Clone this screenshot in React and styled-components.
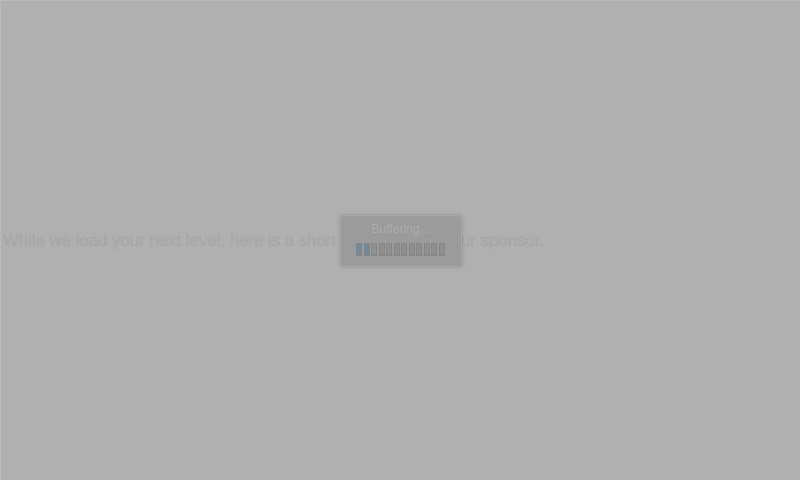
import styled, { createGlobalStyle } from 'styled-components';

const GlobalStyle = createGlobalStyle`
  html, body {
    margin: 0;
    padding: 0;
    background: #b0b0b0;
  }
  body {
    font-family: "Liberation Sans", Arial, sans-serif;
  }
`;

const Screen = styled.div`
  position: relative;
  width: 800px;
  height: 480px;
  box-sizing: border-box;
  border-top: 1px solid #bababa;
  border-left: 1px solid #bababa;
  background: #b0b0b0;
  display: flex;
  align-items: center;
  overflow: hidden;
`;

const Message = styled.p`
  margin: 0;
  padding-left: 2px;
  font-size: 16.8px;
  color: #a8a8a8;
  white-space: nowrap;
  -webkit-text-stroke: 0.4px #a8a8a8;
`;

const Overlay = styled.div`
  position: absolute;
  inset: 0;
  display: flex;
  align-items: center;
  justify-content: center;
`;

const Dialog = styled.div`
  width: 122px;
  height: 52px;
  box-sizing: border-box;
  border: 1px solid #a8a8a8;
  border-radius: 4px;
  background: #9b9b9b;
  box-shadow: 0 0 0 1px rgba(0, 0, 0, 0.04), 0 0 4px rgba(0, 0, 0, 0.12);
  display: flex;
  flex-direction: column;
  align-items: center;
  padding-top: 6px;
  gap: 7px;
`;

const Title = styled.div`
  font-size: 12px;
  color: #ababab;
  line-height: 14px;
`;

const Meter = styled.div`
  display: flex;
  gap: 1.5px;
`;

const Segment = styled.div`
  width: 6px;
  height: 13px;
  box-sizing: border-box;
  border: 1px solid #868686;
  background: ${(p) => (p.$filled ? '#6e8a9c' : '#8f8f8f')};
`;

const SEGMENTS = 12;
const FILLED = 2;

export default function App() {
  return (
    <>
      <GlobalStyle />
      <Screen>
        <Message>While we load your next level, here is a short message from our sponsor.</Message>
        <Overlay>
          <Dialog>
            <Title>Buffering...</Title>
            <Meter>
              {Array.from({ length: SEGMENTS }, (_, i) => (
                <Segment key={i} $filled={i < FILLED} />
              ))}
            </Meter>
          </Dialog>
        </Overlay>
      </Screen>
    </>
  );
}
